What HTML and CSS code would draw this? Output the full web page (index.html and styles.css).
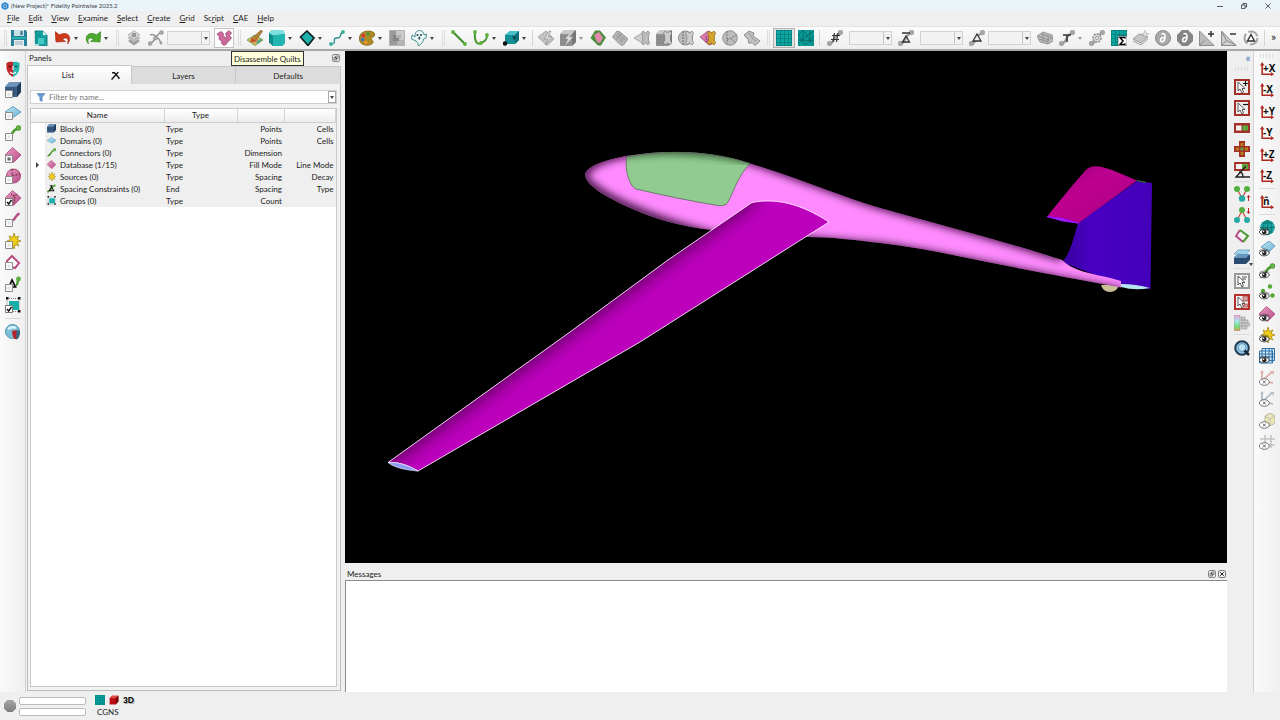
FILE: index.html
```html
<!DOCTYPE html>
<html lang="en">
<head>
<meta charset="utf-8">
<title>(New Project)* Fidelity Pointwise 2025.2</title>
<link rel="stylesheet" href="styles.css">
</head>
<body>
<svg class="sprite" aria-hidden="true">
  <defs>
    <linearGradient id="gPink" x1="0" y1="0" x2="1" y2="1"><stop offset="0" stop-color="#eb9cc4"/><stop offset="1" stop-color="#b84a86"/></linearGradient>
    <linearGradient id="gGrey" x1="0" y1="0" x2="0" y2="1"><stop offset="0" stop-color="#a8a8a8"/><stop offset="1" stop-color="#7c7c7c"/></linearGradient>
    <linearGradient id="gSky" x1="0" y1="0" x2="1" y2="1"><stop offset="0" stop-color="#bfe6f5"/><stop offset="1" stop-color="#6fb4d6"/></linearGradient>
    <linearGradient id="gSpec" x1="0" y1="0" x2="0" y2="1"><stop offset="0" stop-color="#f5a0d8"/><stop offset=".4" stop-color="#a0e8e8"/><stop offset=".75" stop-color="#70d870"/><stop offset="1" stop-color="#f0a060"/></linearGradient>
  </defs>
  <symbol id="box" viewBox="0 0 16 16"><path d="M.5 8.500h7v7h-7z" fill="#fafafa" stroke="#8a8a8a"/><path d="M2.500 10.500h3v3h-3z" fill="#e2e2e6"/></symbol>
  <symbol id="tick" viewBox="0 0 16 16"><path d="M.5 8.500h7v7h-7z" fill="#fff" stroke="#777"/><path d="M2 12l1.700 2L6.500 10" fill="none" stroke="#111" stroke-width="1.400"/></symbol>
  <symbol id="eye" viewBox="0 0 16 16"><path d="M0 12C2 8.500 8.500 8.500 10.500 12 8.500 15.800 2 15.800 0 12z" fill="#fff" stroke="#222" stroke-width=".8"/><circle cx="5.300" cy="12" r="2.300" fill="#222"/><circle cx="4.600" cy="11.300" r=".8" fill="#fff"/><path d="M0 10C3 7.500 7.500 7.500 10.500 10" fill="none" stroke="#444" stroke-width=".6"/></symbol>
  <symbol id="eyex" viewBox="0 0 16 16"><ellipse cx="5.300" cy="12" rx="5" ry="3.300" fill="#fff" stroke="#555" stroke-width=".8"/><path d="M3.800 10.500l3 3m0-3l-3 3" stroke="#444" stroke-width=".8"/></symbol>
  <symbol id="cpt" viewBox="0 0 16 16"><path d="M2 14C9 13 6 4 14 3" fill="none" stroke="#999" stroke-width="2.200"/><circle cx="2.500" cy="13.500" r="2.300" fill="#a6a6a6" stroke="#888" stroke-width=".5"/><circle cx="13.500" cy="2.500" r="2.300" fill="#a6a6a6" stroke="#888" stroke-width=".5"/></symbol>
  <symbol id="bandaid" viewBox="0 0 16 16"><path d="M9 1l2.500 2L14 1l1.700 2.300-1.200 2.200v5l1.200 2.200L14 15l-2.500-2L9 15l-1.500-2.300 1.200-2.200v-5L7.500 3.300z" stroke-width=".7"/></symbol>

  <symbol id="logo" viewBox="0 0 16 16"><path d="M8 0l7 4v8l-7 4-7-4V4z" fill="#2a86d0"/><path d="M8 3l4 2.500v5L8 13l-4-2.500v-5z" fill="#9fd8f5"/><path d="M8 3v10M4 5.500l8 5m0-5l-8 5" stroke="#145a9a"/></symbol>
  <symbol id="save" viewBox="0 0 16 16"><path d="M0 0h14.500L16 1.500V16H0z" fill="#2a7f9b"/><path d="M3 0h10v6H3z" fill="#c5dfe5"/><path d="M9.500 1h2v4h-2z" fill="#2a6f88"/><path d="M1 7h14v2H1z" fill="#25b3ad"/><path d="M3 10h10v6H3z" fill="#e9f0f0"/><path d="M4 12h8M4 14h8" stroke="#9ab"/></symbol>
  <symbol id="export" viewBox="0 0 16 16"><path d="M2 1h8l4 4v11H2z" fill="#19a8a4" stroke="#157f80"/><path d="M10 1v4h4z" fill="#d6f2f2"/><path d="M4 1v14M7 1v14M10 6v9M2 5h7M2 8h12M2 11h12" stroke="#0c8583" stroke-width=".6"/><path d="M1 3v12h5" fill="none" stroke="#eee" stroke-width="1.500"/><path d="M5 8h6v6H5z" fill="#44c9c4"/></symbol>
  <symbol id="undo" viewBox="0 0 16 16"><path d="M0 1.500L1 12l9.500-.5-3-2.500C12 6.500 14 9 12.500 14 18 7.500 13 .5 4.500 4.800z" fill="#cf3a1c" stroke="#9c2810" stroke-width=".6"/></symbol>
  <symbol id="redo" viewBox="0 0 16 16"><path d="M16 1.500L15 12l-9.500-.5 3-2.500C4 6.500 2 9 3.500 14-2 7.500 3 .5 11.500 4.800z" fill="#4cab2c" stroke="#2f7f18" stroke-width=".6"/></symbol>
  <symbol id="layers" viewBox="0 0 16 16"><path d="M8 7l6 4-6 4.500L2 11z" fill="#9c9c9c"/><path d="M8 4l6 4-6 4.500L2 8z" fill="#bcbcbc" stroke="#a8a8a8" stroke-width=".6"/><path d="M8 .5L14 5 8 9.500 2 5z" fill="#d4d4d4" stroke="#a0a0a0" stroke-width=".6"/><path d="M6 3h4v4H6z" fill="#999"/></symbol>
  <symbol id="conngrey" viewBox="0 0 16 16"><path d="M1 14C8 12 7 4 14 2M2 5c4-2 9 3 11 8" fill="none" stroke="#999" stroke-width="1.500"/><g fill="#aaa" stroke="#888" stroke-width=".5"><circle cx="2" cy="13.500" r="2"/><circle cx="13.500" cy="2.500" r="2"/><circle cx="7.500" cy="8" r="2"/><circle cx="13" cy="13" r="1.200"/></g></symbol>
  <symbol id="disassemble" viewBox="0 0 16 16"><g fill="#cf6a9c" stroke="#a04674" stroke-width=".8"><path d="M1 4l4-2.500 2.500 2-.5 2.500 2.500 1.500-.5 2.500 2.500 1.500-.5 2-3 2-2.500-2 .5-2.500L3 9.500l.5-2.500z"/><path d="M9.500 3.500l3.500-3L15.500 3l-2 2.500 2 2.500-3 3.500-2.500-2 .5-3z"/></g></symbol>
  <symbol id="paint" viewBox="0 0 16 16"><path d="M0 10l8-5 8 5-8 5.500z" fill="#d9c45a" stroke="#5b8e3c" stroke-width=".8"/><path d="M3 10l5-3 4 3-5 3.500z" fill="#df8250"/><path d="M9 12l4-3 2 1-5 4z" fill="#44aa88"/><path d="M5 8.500L14 0l1.500 1.500-7 9-3.500 1z" fill="#b68334" stroke="#72501c" stroke-width=".6"/><path d="M5 8l3 3-5 1z" fill="#cf4331"/></symbol>
  <symbol id="cube" viewBox="0 0 16 16"><path d="M0 3l3-3h11l2 4v9l-3 3H4L0 12z" fill="#1ba5a2"/><path d="M0 3l4 2.500V16l-4-3.500z" fill="#0e8a87"/><path d="M0 3l3-3h11l2 4-12 1.500z" fill="#7de0dc"/><path d="M4 5.500L16 4v9l-3 3H4z" fill="#21b5b0"/></symbol>
  <symbol id="dom" viewBox="0 0 16 16"><path d="M8 1l7 7-6 7.500L1.500 7z" fill="#1fb0aa" stroke="#0a1b1d" stroke-width="1.600"/></symbol>
  <symbol id="curve" viewBox="0 0 16 16"><path d="M2 14c7 0 0-6 6-6s2-6 6-6" fill="none" stroke="#268d8c" stroke-width="1.300"/><circle cx="2" cy="14" r="1.900" fill="#3fae9b"/><circle cx="14" cy="2" r="1.900" fill="#3fae9b"/></symbol>
  <symbol id="palette" viewBox="0 0 16 16"><path d="M9 1c8 0 8 5 5 6-3 1-1 3 0 4 1 3-4 5-8 4C-2 14-2 1 9 1z" fill="#ad8a26" stroke="#765b10" stroke-width=".7"/><circle cx="4.500" cy="5.500" r="1.800" fill="#d33"/><circle cx="9" cy="4" r="1.700" fill="#3a9a3a"/><circle cx="3.500" cy="9.500" r="1.700" fill="#3f70c8"/><circle cx="7" cy="12.500" r="1.700" fill="#f0952c"/></symbol>
  <symbol id="greysq" viewBox="0 0 16 16"><path d="M0 0h16v16H0z" fill="#b4b4b4"/><path d="M1 1h7v14H1z" fill="#9a9a9a"/><path d="M7 1h8v9H7z" fill="#cacaca"/><path d="M4 5h6v6H4z" fill="#858585"/><path d="M7 5h5v3H7z" fill="#b0b0b0"/></symbol>
  <symbol id="ghost" viewBox="0 0 16 16"><path d="M4 5c0-6 9-6 9 0l2.500-1-.5 4-2.500 1c0 3-2 5-5.500 7 1-3-1-3-2-5L.5 9 1 5l3 2z" fill="#eaf7f7" stroke="#3f8587" stroke-width=".9"/><circle cx="6.500" cy="5" r="1" fill="#244"/><circle cx="10" cy="5" r="1" fill="#244"/><ellipse cx="8.300" cy="8" rx="1" ry="1.600" fill="#244"/></symbol>
  <symbol id="line" viewBox="0 0 16 16"><path d="M2 2l12 12" stroke="#3b8c28" stroke-width="2"/><circle cx="2" cy="2" r="1.900" fill="#5fb33c"/><circle cx="14" cy="14" r="1.900" fill="#5fb33c"/></symbol>
  <symbol id="ucurve" viewBox="0 0 16 16"><path d="M2 2c-1 11 3 13 6 11 4-2 6-3 6-8" fill="none" stroke="#47952e" stroke-width="2"/><circle cx="2" cy="2" r="1.900" fill="#5fb33c"/><circle cx="14" cy="5" r="1.900" fill="#5fb33c"/><circle cx="8" cy="13" r="1.900" fill="#5fb33c"/></symbol>
  <symbol id="cubept" viewBox="0 0 16 16"><path d="M2 5l5-4h9v9l-4 4H2z" fill="#158f96"/><path d="M2 5l5-4h9l-4 4z" fill="#48c0c6"/><path d="M12 5l4-4v9l-4 4z" fill="#0b6f78"/><circle cx="2" cy="13.500" r="2.300" fill="#111"/><path d="M9 6l4 1-2 3z" fill="#0a3c42"/></symbol>
  <symbol id="gflash" viewBox="0 0 16 16"><path d="M0 7l8-6 8 8-7 6.500z" fill="#c3c3c3" stroke="#999" stroke-width=".8"/><path d="M11 1L6 9h4l-3 6 7-8h-4l3-6z" fill="#ddd" stroke="#888" stroke-width=".6"/></symbol>
  <symbol id="gcube" viewBox="0 0 16 16"><path d="M0 4l4-4h12v12l-4 4H0z" fill="#999"/><path d="M0 4l4-4h12l-4 4z" fill="#c9c9c9"/><path d="M12 4l4-4v12l-4 4z" fill="#777"/><path d="M2 4v12M4.500 4v12M7 4v12M9.500 4v12M0 7h12M0 10h12M0 13h12" stroke="#808080" stroke-width=".7"/></symbol>
  <symbol id="gcubef" viewBox="0 0 16 16"><use href="#gcube"/><path d="M12 1L5 9h3l-3 7 8-9H9l5-6z" fill="#e2e2e2" stroke="#999" stroke-width=".5"/></symbol>
  <symbol id="gcubeb" viewBox="0 0 16 16"><use href="#gcube"/><use href="#bandaid" fill="#ccc" stroke="#777"/></symbol>
  <symbol id="greenpink" viewBox="0 0 16 16"><path d="M5 .5h5l6 7-5 8H8L.5 8z" fill="#4b8d3b"/><path d="M4 5l5-3 4 6-3 5-3-1z" fill="#e389ac"/></symbol>
  <symbol id="gdia" viewBox="0 0 16 16"><path d="M5 1l3 1 8 7-5 6.500-3-1L.5 7z" fill="#b5b5b5" stroke="#969696"/><path d="M4 5l7 7M6 3l7 7M4 10l6-7M8 12l5-6" stroke="#8b8b8b" stroke-width=".7"/></symbol>
  <symbol id="gfanb" viewBox="0 0 16 16"><path d="M0 8l10-6v12z" fill="#cfcfcf" stroke="#999" stroke-width=".8"/><use href="#bandaid" fill="#bbb" stroke="#808080"/></symbol>
  <symbol id="gballb" viewBox="0 0 16 16"><circle cx="7.500" cy="8" r="7" fill="#bcbcbc" stroke="#959595"/><path d="M5 1v14" stroke="#666" stroke-dasharray="2 1"/><use href="#bandaid" fill="#ccc" stroke="#777"/></symbol>
  <symbol id="pinkb" viewBox="0 0 16 16"><path d="M0 7l8-6 4 2v11l-3 1z" fill="url(#gPink)" stroke="#a34678" stroke-width=".8"/><path d="M5 6l2 2-1 4" fill="none" stroke="#722f54" stroke-dasharray="1 1"/><use href="#bandaid" fill="#d3a52e" stroke="#8c6718"/></symbol>
  <symbol id="gball" viewBox="0 0 16 16"><circle cx="8" cy="8" r="7.300" fill="#bdbdbd" stroke="#939393"/><path d="M5 1v13M5 10l10-5M9 9l5 4" fill="none" stroke="#777" stroke-dasharray="2 1"/></symbol>
  <symbol id="gquilt" viewBox="0 0 16 16"><path d="M0 5l5-4 5 2-1 3 7 5-5 4.500-3-3-3 1-1-4z" fill="#c0c0c0" stroke="#8e8e8e"/><path d="M5 3l3 5m0 0l4 3" stroke="#777" stroke-dasharray="1 1"/></symbol>
  <symbol id="grid" viewBox="0 0 16 16"><path d="M0 0h16v16H0z" fill="#0aa7a2"/><path d="M.5 0v16M4.500 0v16M8.500 0v16M12.500 0v16M15.500 0v16M0 .5h16M0 4.500h16M0 8.500h16M0 12.500h16M0 15.500h16" stroke="#067d7a" stroke-width=".8"/></symbol>
  <symbol id="tri" viewBox="0 0 16 16"><path d="M0 0h16v16H0z" fill="#0a9b98"/><path d="M0 5l5-5 4 6 7-5M0 5l4 5 5-4 3 5 4-6M0 14l4-4 3 5 5-4 4 4M0 10l4 0 8 1 4-1M5 0v10M12 0v11" fill="none" stroke="#04605f" stroke-width=".7"/></symbol>
  <symbol id="dim" viewBox="0 0 16 16"><use href="#cpt"/><path d="M5 5.500h8M4 9.500h8M7.500 3L6 12M11 3L9.500 12" stroke="#333" stroke-width="1.200"/></symbol>
  <symbol id="avgsp" viewBox="0 0 16 16"><use href="#cpt"/><path d="M4 3h8M8 6l3.500 6h-7z" fill="none" stroke="#333" stroke-width="1.300"/></symbol>
  <symbol id="sp" viewBox="0 0 16 16"><use href="#cpt"/><path d="M8 4l4 7H4z" fill="#eee" stroke="#333" stroke-width="1.300"/></symbol>
  <symbol id="gband" viewBox="0 0 16 16"><path d="M0 6l6-4 9 3 1 6-5 3-8-2z" fill="#bbb" stroke="#999"/><path d="M1 6l10 4 5-3M4 4l10 3M2 9l9 3M6 3v8M11 5v9" fill="none" stroke="#8a8a8a" stroke-width=".8"/></symbol>
  <symbol id="tan" viewBox="0 0 16 16"><use href="#cpt"/><path d="M4 5h8M8 5v7" stroke="#333" stroke-width="1.500"/></symbol>
  <symbol id="gearc" viewBox="0 0 16 16"><use href="#cpt"/><circle cx="8" cy="8" r="4" fill="#ddd" stroke="#999" stroke-width="1.800" stroke-dasharray="2 1"/><circle cx="8" cy="8" r="1.500" fill="#fff" stroke="#999"/></symbol>
  <symbol id="gridsum" viewBox="0 0 16 16"><use href="#grid"/><path d="M7 6h9v10H7z" fill="#fff" stroke="#333" stroke-width=".6"/><path d="M14 8.500V7.500H9l3 3.500-3 3.500h5v-1" fill="none" stroke="#000" stroke-width="1.500"/></symbol>
  <symbol id="glayer" viewBox="0 0 16 16"><path d="M0 9l6-5 9 3-7 6z" fill="#c6c6c6" stroke="#999"/><path d="M0 11l8 4 7-6" fill="none" stroke="#999"/><path d="M12 0l1 3 3 1-3 1-1 3-1-3-3-1 3-1z" fill="#ddd" stroke="#aaa" stroke-width=".5"/></symbol>
  <symbol id="dcirc" viewBox="0 0 16 16"><circle cx="8" cy="8" r="7.500" fill="#a9a9a9" stroke="#8a8a8a"/><path d="M6.500 4c5-2.500 4 6 1.500 7.500-3.500 1.500-3-4.500.5-4 1 0 1.500 1 1.500 1" fill="none" stroke="#fff" stroke-width="1.500"/></symbol>
  <symbol id="doct" viewBox="0 0 16 16"><path d="M5 0h6l5 5v6l-5 5H5l-5-5V5z" fill="#858585"/><path d="M6.500 4c5-2.500 4 6 1.500 7.500-3.500 1.500-3-4.500.5-4 1 0 1.500 1 1.500 1" fill="none" stroke="#fff" stroke-width="1.500"/></symbol>
  <symbol id="triplus" viewBox="0 0 16 16"><path d="M.5 1v14.500H15z" fill="#bcbcbc" stroke="#8d8d8d"/><path d="M.5 15.500l5-5" stroke="#888"/><path d="M9 4h6M12 1v6" stroke="#333" stroke-width="1.500"/></symbol>
  <symbol id="triminus" viewBox="0 0 16 16"><path d="M.5 1v14.500H15z" fill="#cdcdcd" stroke="#8d8d8d"/><path d="M.5 15.500l5-5L15 15M5.500 10.500L1 2" fill="none" stroke="#888"/><path d="M9 4h6" stroke="#333" stroke-width="1.500"/></symbol>
  <symbol id="tricyc" viewBox="0 0 16 16"><circle cx="8" cy="8" r="6.500" fill="none" stroke="#aaa" stroke-width="2.200" stroke-dasharray="11 2.500"/><path d="M8 4.500l3.500 6.500h-7z" fill="#fff" stroke="#333" stroke-width="1.400"/></symbol>

  <symbol id="mask" viewBox="0 0 16 16"><path d="M8 1v15C2 13 1 8 1.500 2 4 .5 6 .5 8 1z" fill="#c4242c"/><path d="M8 1c2-.5 4-.5 6.500 1C15 8 14 13 8 16z" fill="#27b5ae"/><path d="M3.500 5.500h3" stroke="#5c0c10" stroke-width="1.500"/><path d="M9.500 5.500h3" stroke="#0a5a56" stroke-width="1.500"/><path d="M8 5v4M5 11q3 3 6 0" fill="none" stroke="#fff" stroke-width="1.100"/></symbol>
  <symbol id="bcube" viewBox="0 0 16 16"><path d="M0 5l4-4.500L16 0v10l-4 5H0z" fill="#3d628c"/><path d="M0 5l4-4.500L16 0l-4 4.500z" fill="#6d94b8"/><path d="M12 4.500L16 0v10l-4 5z" fill="#213b5c"/><path d="M3 5v10M6 5v10M9 5v10M0 8h12M0 11h12" stroke="#29476b" stroke-width=".8"/></symbol>
  <symbol id="sky" viewBox="0 0 16 16"><path d="M0 8l8-5.500L16 8l-7 5z" fill="url(#gSky)" stroke="#4c93b5" stroke-width=".8"/></symbol>
  <symbol id="gconn" viewBox="0 0 16 16"><path d="M1 13.500C9 14 4 6 13 3.500" fill="none" stroke="#4c9a30" stroke-width="2.800"/><circle cx="13.500" cy="3" r="2.500" fill="#63b544" stroke="#357a1e" stroke-width=".5"/></symbol>
  <symbol id="pink" viewBox="0 0 16 16"><path d="M7.500 .5L16 8l-7.500 7.500L0 8z" fill="url(#gPink)" stroke="#a64679" stroke-width=".8"/></symbol>
  <symbol id="star" viewBox="0 0 16 16"><path d="M9 0l1.500 4.500L14 3l-2 3.500 4 1.500-4 1.500L14 13l-3.500-1.500L9 16l-1.500-4.500L4 13l1.500-3.500L2 8l3.500-1.500L4 3l3.500 1.500z" fill="#f2cd18" stroke="#9c7d0c" stroke-width=".7"/></symbol>
  <symbol id="tri3" viewBox="0 0 16 16"><path d="M11 9c2 0 1-3 2.500-6" fill="none" stroke="#4c9a30" stroke-width="2.400"/><circle cx="13.500" cy="3" r="2.400" fill="#58ae3a"/><path d="M7 4l3.500 7H4z" fill="none" stroke="#111" stroke-width="1.700"/></symbol>
  <symbol id="spc" viewBox="0 0 16 16"><path d="M1 14C8 13 8 4 14 2" fill="none" stroke="#4c9a30" stroke-width="2.400"/><circle cx="2" cy="13.500" r="2" fill="#58ae3a"/><circle cx="13.500" cy="3" r="2" fill="#58ae3a"/><path d="M5 3h5M8 5l4 7H4z" fill="none" stroke="#111" stroke-width="1.800"/></symbol>
  <symbol id="group" viewBox="0 0 16 16"><path d="M2 1.500h12v13H2z" fill="none" stroke="#666" stroke-width=".8" stroke-dasharray="1 1"/><path d="M4 4h10v9H4z" fill="#16afa9"/><path d="M1 0h2.500v2.500H1zM13 0h2.500v2.500H13zM13 13h2.500v2.500H13zM1 13h2.500v2.500H1z" fill="#111"/></symbol>
  <symbol id="l-block" viewBox="0 0 16 16"><use href="#bcube"/><use href="#box"/></symbol>
  <symbol id="l-dom" viewBox="0 0 16 16"><use href="#sky"/><use href="#box"/></symbol>
  <symbol id="l-conn" viewBox="0 0 16 16"><use href="#gconn"/><use href="#box"/></symbol>
  <symbol id="l-pink" viewBox="0 0 16 16"><use href="#pink"/><use href="#box"/><path d="M2.500 10.500h3v3h-3z" fill="#666"/></symbol>
  <symbol id="l-ball" viewBox="0 0 16 16"><circle cx="8.500" cy="8" r="7" fill="url(#gPink)" stroke="#a64679"/><path d="M7 1v7l8-2" fill="none" stroke="#522" stroke-dasharray="2 1.500"/><use href="#box"/></symbol>
  <symbol id="l-quilt" viewBox="0 0 16 16"><use href="#pink"/><path d="M6 4l4 3-1 6M8 6l5-2" fill="none" stroke="#522" stroke-dasharray="1.500 1"/><use href="#tick"/></symbol>
  <symbol id="l-curve" viewBox="0 0 16 16"><path d="M2 10C12 11 9 4 14.500 2.500" fill="none" stroke="#b84a80" stroke-width="2.400"/><use href="#box"/></symbol>
  <symbol id="l-star" viewBox="0 0 16 16"><use href="#star"/><use href="#box"/></symbol>
  <symbol id="l-loop" viewBox="0 0 16 16"><path d="M7 2l7 7-4 5-7-2-1-5z" fill="#fff" stroke="#b84a80" stroke-width="2"/><use href="#box"/></symbol>
  <symbol id="l-tri" viewBox="0 0 16 16"><use href="#tri3"/><use href="#box"/></symbol>
  <symbol id="l-group" viewBox="0 0 16 16"><use href="#group"/><use href="#tick"/></symbol>
  <symbol id="l-mask" viewBox="0 0 16 16"><circle cx="7.500" cy="7.500" r="7" fill="#7fc0d6" stroke="#4f93ab"/><path d="M3 5q4-3 8-1" fill="none" stroke="#d8f5fc" stroke-width="2.500"/><path d="M7 7q4-1.500 8 0 0 7-4 8.500-4-1.500-4-8.500z" fill="#b3262e"/><path d="M11.500 6.300q2 0 3.500.7 0 7-3.500 8.500z" fill="#2b6f8c"/></symbol>

  <symbol id="cursor" viewBox="0 0 16 16"><path d="M4 3v9l2-2 2 4 1.500-1L8 9.500h3z" fill="#fff" stroke="#333" stroke-width=".8"/></symbol>
  <symbol id="selp" viewBox="0 0 16 16"><path d="M1 1h14v14H1z" fill="#eee" stroke="#a33027" stroke-width="2"/><use href="#cursor"/><path d="M9 4.500h5M11.500 2v5" stroke="#111" stroke-width="1.200"/></symbol>
  <symbol id="selm" viewBox="0 0 16 16"><path d="M1 1h14v14H1z" fill="#eee" stroke="#a33027" stroke-width="2"/><use href="#cursor"/><path d="M9 4.500h5" stroke="#111" stroke-width="1.200"/></symbol>
  <symbol id="toggle" viewBox="0 0 16 16"><path d="M0 3h16v10H0z" fill="#a33027"/><path d="M2 5.500h5.500v5H2z" fill="#f2f2f2"/><path d="M8.500 5.500H14v5H8.500z" fill="#58a838"/></symbol>
  <symbol id="cross" viewBox="0 0 16 16"><path d="M5 0h6v5h5v6h-5v5H5v-5H0V5h5z" fill="#a33027"/><path d="M6.500 2h3v3h-3zM2 6.500h3v3H2zM11 6.500h3v3h-3zM6.500 11h3v3h-3z" fill="#b8801c"/><path d="M6.500 6.500h3v3h-3z" fill="#58a838"/></symbol>
  <symbol id="angle" viewBox="0 0 16 16"><path d="M1 1h14v7H1z" fill="#f2f2f2" stroke="#a33027" stroke-width="1.800"/><path d="M8 2h6v5H8z" fill="#58a838"/><path d="M12 4L2 15h14M5 10q4 0 4 5" fill="none" stroke="#222" stroke-width="1.400"/></symbol>
  <symbol id="tree1" viewBox="0 0 16 16"><path d="M3 3l5 9 5-9" fill="none" stroke="#c43" stroke-width="1.200"/><circle cx="3" cy="3" r="3" fill="#55b043"/><circle cx="13" cy="3" r="3" fill="#55b043"/><circle cx="8" cy="12.500" r="3.200" fill="#27aaa5"/><path d="M14.500 15v-5M13 11.500l1.500-2 1.500 2" fill="none" stroke="#b22"/></symbol>
  <symbol id="tree2" viewBox="0 0 16 16"><path d="M3 13l5-9 5 9" fill="none" stroke="#c43" stroke-width="1.200"/><circle cx="8" cy="3" r="3" fill="#55b043"/><circle cx="3" cy="13" r="3" fill="#27aaa5"/><circle cx="13" cy="13" r="3" fill="#27aaa5"/><path d="M14.500 1v5M13 4.500l1.500 2 1.500-2" fill="none" stroke="#b22"/></symbol>
  <symbol id="diaout" viewBox="0 0 16 16"><path d="M9 14L2 8l4-6" fill="none" stroke="#b54c8c" stroke-width="2"/><path d="M6 2l8 6-5 6" fill="none" stroke="#4c9a30" stroke-width="2"/></symbol>
  <symbol id="stack" viewBox="0 0 16 16"><path d="M0 9l4-3h12v5l-4 4H0z" fill="#2a4a70"/><path d="M0 8l4-3h12l-4 4H0z" fill="#6794bd"/><path d="M0 5l4-4h12l-4 4.500z" fill="#9fd4ea" stroke="#4d87ab" stroke-width=".6"/></symbol>
  <symbol id="selg" viewBox="0 0 16 16"><path d="M1 1h14v14H1z" fill="#f5f5f5" stroke="#999" stroke-width="2"/><use href="#cursor"/><path d="M8 4h5M8 6h4" stroke="#555"/></symbol>
  <symbol id="selr" viewBox="0 0 16 16"><path d="M1 1h14v14H1z" fill="#f5f5f5" stroke="#b53129" stroke-width="2"/><use href="#cursor"/><path d="M9 2h5v5H9zM10 10h4v3h-4z" fill="#c9a6a6" stroke="#b53129" stroke-width=".7"/></symbol>
  <symbol id="spec" viewBox="0 0 16 16"><path d="M0 0h6v16H0z" fill="url(#gSpec)" stroke="#888" stroke-width=".5"/><path d="M7 2h4v3h3v3h2v3h-3v3H7z" fill="#c9c9c9" stroke="#999" stroke-width=".6"/><path d="M7 5h5M7 8h7M7 11h6" stroke="#888" stroke-width=".7"/></symbol>
  <symbol id="mag" viewBox="0 0 16 16"><circle cx="8" cy="8" r="6.800" fill="#8fc6e2" stroke="#243c52" stroke-width="2"/><circle cx="8" cy="7.500" r="4" fill="#b8e2f2" stroke="#5b96b8"/><path d="M10.500 10.500l4.500 4.500" stroke="#182838" stroke-width="2.500"/></symbol>
  <symbol id="axis" viewBox="0 0 16 16"><path d="M2.500 2v12H14" fill="none" stroke="#ad2a20" stroke-width="1.800"/><path d="M0 4l2.500-4L5 4zM12.500 11.500l3.500 2.500-3.500 2.500z" fill="#ad2a20"/></symbol>
  <symbol id="e-globe" viewBox="0 0 16 16"><circle cx="8.500" cy="7.500" r="7.300" fill="#1ba5a2"/><path d="M1 7.500h15M8.500 0v15M3 3h11M3 12h11" stroke="#0a6f6d" stroke-width=".8"/><ellipse cx="8.500" cy="7.500" rx="4" ry="7.300" fill="none" stroke="#0a6f6d" stroke-width=".8"/><use href="#eye"/></symbol>
  <symbol id="e-dom" viewBox="0 0 16 16"><path d="M2 6l8-6 6 5-6 6z" fill="url(#gSky)" stroke="#4c93b5" stroke-width=".8"/><use href="#eye"/></symbol>
  <symbol id="e-conn" viewBox="0 0 16 16"><use href="#gconn"/><use href="#eye"/></symbol>
  <symbol id="e-pts" viewBox="0 0 16 16"><g fill="#55a838"><circle cx="4" cy="7" r="2.200"/><circle cx="11" cy="2.500" r="2.200"/><circle cx="13.500" cy="11.500" r="2.200"/></g><use href="#eye"/></symbol>
  <symbol id="e-pink" viewBox="0 0 16 16"><use href="#pink"/><use href="#eye"/></symbol>
  <symbol id="e-star" viewBox="0 0 16 16"><use href="#star"/><use href="#eye"/></symbol>
  <symbol id="e-grid" viewBox="0 0 16 16"><path d="M.5 3h13v12H.5zM3 .5h12.500v12H3z" fill="#d6ecfa" stroke="#2c70a8"/><path d="M6.500 0v14M10 0v14M13 0v14M0 6h16M0 9h16" stroke="#2c70a8"/><use href="#eye"/></symbol>
  <symbol id="x-ax1" viewBox="0 0 16 16"><path d="M3 1v10l11 2M3 11L13 2" fill="none" stroke="#dfb3ae" stroke-width="2"/><path d="M1 3l2-3 2 3zM11 1h4v4z" fill="#dfb3ae"/><use href="#eyex"/></symbol>
  <symbol id="x-ax2" viewBox="0 0 16 16"><path d="M3 1v10l11 2M3 11L13 2" fill="none" stroke="#b9c1cb" stroke-width="2"/><path d="M1 3l2-3 2 3zM11 1h4v4z" fill="#b9c1cb"/><use href="#eyex"/></symbol>
  <symbol id="x-cube" viewBox="0 0 16 16"><path d="M6 3l5-3 5 3v7l-5 3-5-3z" fill="#ece6b4" stroke="#b5b5a0"/><path d="M6 3l5 3 5-3M11 6v7" fill="none" stroke="#bbb"/><use href="#eyex"/></symbol>
  <symbol id="x-hash" viewBox="0 0 16 16"><path d="M6 1v13M12 1v13M1 5h15M1 11h15" stroke="#c3c3c3" stroke-width="1.600"/><use href="#eyex"/></symbol>
  <symbol id="funnel" viewBox="0 0 16 16"><path d="M1 1h14l-5 6.500V15l-4-2V7.500z" fill="#6d9bd1" stroke="#4675ad"/></symbol>
  <symbol id="pin" viewBox="0 0 16 16"><path d="M1 15L13 2M2 3h4l8 9v2" fill="none" stroke="#111" stroke-width="2.600"/></symbol>
  <symbol id="float" viewBox="0 0 16 16"><rect x="1" y="1" width="14" height="14" rx="3" fill="#eee" stroke="#666" stroke-width="1.500"/><path d="M7 4h5v5H7zM4 7h5v5H4z" fill="none" stroke="#444" stroke-width="1.300"/></symbol>
  <symbol id="close" viewBox="0 0 16 16"><rect x="1" y="1" width="14" height="14" rx="3" fill="#eee" stroke="#555" stroke-width="1.500"/><path d="M4.500 4.500l7 7m0-7l-7 7" stroke="#222" stroke-width="2"/></symbol>
  <symbol id="redcube" viewBox="0 0 16 16"><path d="M1 5l4-4h10v9l-4 5H1z" fill="#ba0d14"/><path d="M1 5l4-4h10l-4 4z" fill="#e34a48"/><path d="M11 5l4-4v9l-4 5z" fill="#730509"/></symbol>
  <symbol id="oct" viewBox="0 0 16 16"><path d="M5 0h6l5 5v6l-5 5H5l-5-5V5z" fill="url(#gGrey)" stroke="#777" stroke-width=".5"/></symbol>
</svg>

<div class="app">
  <header class="titlebar">
    <svg class="logo"><use href="#logo"/></svg>
    <h1 class="title">(New Project)* Fidelity Pointwise 2025.2</h1>
    <div class="winbtns">
      <button type="button" aria-label="Minimize"><svg viewBox="0 0 6 6"><path d="M0 3.500h6" /></svg></button>
      <button type="button" aria-label="Restore"><svg viewBox="0 0 6 6"><path d="M.5 2h3.500v3.500H.5zM2 2V.5h3.500V4H4"/></svg></button>
      <button type="button" aria-label="Close"><svg viewBox="0 0 6 6"><path d="M.5.5l5 5m0-5l-5 5"/></svg></button>
    </div>
  </header>

  <nav class="menubar">
    <button type="button"><u>F</u>ile</button><button type="button"><u>E</u>dit</button><button type="button"><u>V</u>iew</button><button type="button"><u>E</u>xamine</button><button type="button"><u>S</u>elect</button><button type="button"><u>C</u>reate</button><button type="button"><u>G</u>rid</button><button type="button">Sc<u>r</u>ipt</button><button type="button"><u>C</u>AE</button><button type="button"><u>H</u>elp</button>
  </nav>

  <div class="toolbar" role="toolbar" aria-label="Main">
    <i class="grip lead"></i>
    <button class="tool" type="button" aria-label="Save"><svg><use href="#save"/></svg></button>
    <button class="tool" type="button" aria-label="Export"><svg><use href="#export"/></svg></button>
    <button class="tool" type="button" aria-label="Undo"><svg><use href="#undo"/></svg></button>
    <button class="drop" type="button" aria-label="Undo list"></button>
    <button class="tool" type="button" aria-label="Redo"><svg><use href="#redo"/></svg></button>
    <button class="drop" type="button" aria-label="Redo list"></button>
    <i class="grip wide"></i>
    <button class="tool" type="button" aria-label="Layers"><svg><use href="#layers"/></svg></button>
    <button class="tool" type="button" aria-label="Join connectors"><svg><use href="#conngrey"/></svg></button>
    <span class="combo first"><select aria-label="Angle"></select></span>
    <button class="tool hover" type="button" aria-label="Disassemble Quilts"><svg><use href="#disassemble"/></svg><span class="tooltip">Disassemble Quilts</span></button>
    <i class="grip"></i>
    <button class="tool" type="button" aria-label="Attributes"><svg><use href="#paint"/></svg></button>
    <button class="tool" type="button" aria-label="Shaded"><svg><use href="#cube"/></svg></button>
    <button class="drop" type="button" aria-label="Shading options"></button>
    <button class="tool" type="button" aria-label="Domain style"><svg><use href="#dom"/></svg></button>
    <button class="drop" type="button" aria-label="Domain options"></button>
    <button class="tool" type="button" aria-label="Line style"><svg><use href="#curve"/></svg></button>
    <button class="drop" type="button" aria-label="Line options"></button>
    <button class="tool" type="button" aria-label="Color"><svg><use href="#palette"/></svg></button>
    <button class="drop" type="button" aria-label="Color options"></button>
    <button class="tool" type="button" aria-label="Pattern"><svg><use href="#greysq"/></svg></button>
    <button class="tool" type="button" aria-label="Ghost"><svg><use href="#ghost"/></svg></button>
    <button class="drop" type="button" aria-label="Ghost options"></button>
    <i class="grip"></i>
    <button class="tool" type="button" aria-label="Two point line"><svg><use href="#line"/></svg></button>
    <button class="tool" type="button" aria-label="Curve"><svg><use href="#ucurve"/></svg></button>
    <button class="drop" type="button" aria-label="Curve options"></button>
    <button class="tool" type="button" aria-label="On database"><svg><use href="#cubept"/></svg></button>
    <button class="drop" type="button" aria-label="Database options"></button>
    <i class="sep"></i>
    <button class="tool" type="button" aria-label="Assemble domain"><svg><use href="#gflash"/></svg></button>
    <button class="tool" type="button" aria-label="Assemble block"><svg><use href="#gcubef"/></svg></button>
    <button class="drop off" type="button" aria-label="Block options"></button>
    <button class="tool" type="button" aria-label="Edge"><svg><use href="#greenpink"/></svg></button>
    <button class="tool" type="button" aria-label="Mesh"><svg><use href="#gdia"/></svg></button>
    <button class="tool" type="button" aria-label="Heal fan"><svg><use href="#gfanb"/></svg></button>
    <button class="tool" type="button" aria-label="Heal block"><svg><use href="#gcubeb"/></svg></button>
    <button class="tool" type="button" aria-label="Heal model"><svg><use href="#gballb"/></svg></button>
    <button class="tool" type="button" aria-label="Heal quilt"><svg><use href="#pinkb"/></svg></button>
    <button class="tool" type="button" aria-label="Model"><svg><use href="#gball"/></svg></button>
    <button class="tool" type="button" aria-label="Quilt"><svg><use href="#gquilt"/></svg></button>
    <i class="grip"></i>
    <button class="tool active" type="button" aria-label="Structured"><svg><use href="#grid"/></svg></button>
    <button class="tool" type="button" aria-label="Unstructured"><svg><use href="#tri"/></svg></button>
    <i class="sep wide"></i>
    <button class="tool" type="button" aria-label="Set dimension"><svg><use href="#dim"/></svg></button>
    <span class="combo"><select aria-label="Dimension"></select></span>
    <button class="tool" type="button" aria-label="Set average spacing"><svg><use href="#avgsp"/></svg></button>
    <span class="combo"><select aria-label="Average spacing"></select></span>
    <button class="tool" type="button" aria-label="Set spacing"><svg><use href="#sp"/></svg></button>
    <span class="combo last"><select aria-label="Spacing"></select></span>
    <button class="tool" type="button" aria-label="Project"><svg><use href="#gband"/></svg></button>
    <button class="tool" type="button" aria-label="Distribution"><svg><use href="#tan"/></svg></button>
    <button class="drop off" type="button" aria-label="Distribution options"></button>
    <button class="tool" type="button" aria-label="Solve"><svg><use href="#gearc"/></svg></button>
    <button class="tool" type="button" aria-label="Count cells"><svg><use href="#gridsum"/></svg></button>
    <button class="tool" type="button" aria-label="New layer"><svg><use href="#glayer"/></svg></button>
    <button class="tool" type="button" aria-label="Initialize"><svg><use href="#dcirc"/></svg></button>
    <button class="tool" type="button" aria-label="Stop"><svg><use href="#doct"/></svg></button>
    <button class="tool" type="button" aria-label="Refine"><svg><use href="#triplus"/></svg></button>
    <button class="tool" type="button" aria-label="Coarsen"><svg><use href="#triminus"/></svg></button>
    <button class="tool" type="button" aria-label="Retriangulate"><svg><use href="#tricyc"/></svg></button>
    <i class="sep"></i>
    <button class="more" type="button" aria-label="More tools">»</button>
  </div>

  <main class="main">
    <div class="rail left" role="toolbar" aria-label="Selection masks">
      <div class="set twelve">
        <button class="tool" type="button" aria-label="Toggle all"><svg><use href="#mask"/></svg></button>
        <button class="tool" type="button" aria-label="Mask blocks"><svg><use href="#l-block"/></svg></button>
        <button class="tool" type="button" aria-label="Mask domains"><svg><use href="#l-dom"/></svg></button>
        <button class="tool" type="button" aria-label="Mask connectors"><svg><use href="#l-conn"/></svg></button>
        <button class="tool" type="button" aria-label="Mask database"><svg><use href="#l-pink"/></svg></button>
        <button class="tool" type="button" aria-label="Mask models"><svg><use href="#l-ball"/></svg></button>
        <button class="tool" type="button" aria-label="Mask quilts"><svg><use href="#l-quilt"/></svg></button>
        <button class="tool" type="button" aria-label="Mask curves"><svg><use href="#l-curve"/></svg></button>
        <button class="tool" type="button" aria-label="Mask sources"><svg><use href="#l-star"/></svg></button>
        <button class="tool" type="button" aria-label="Mask boundaries"><svg><use href="#l-loop"/></svg></button>
        <button class="tool" type="button" aria-label="Mask spacings"><svg><use href="#l-tri"/></svg></button>
        <button class="tool" type="button" aria-label="Mask groups"><svg><use href="#l-group"/></svg></button>
      </div>
      <hr>
      <div class="set one"><button class="tool" type="button" aria-label="Mask view"><svg><use href="#l-mask"/></svg></button></div>
    </div>

    <section class="panels">
      <div class="dockhead"><h2>Panels</h2><button type="button" aria-label="Float panels"><svg><use href="#float"/></svg></button></div>
      <div class="tabs" role="tablist">
        <button class="tab on" type="button" role="tab" aria-selected="true"><span>List</span><svg><use href="#pin"/></svg></button>
        <button class="tab" type="button" role="tab">Layers</button>
        <button class="tab" type="button" role="tab">Defaults</button>
      </div>
      <div class="tabbody">
        <div class="filter">
          <svg><use href="#funnel"/></svg>
          <input type="text" aria-label="Filter by name" placeholder="Filter by name...">
          <button type="button" aria-label="Filter history"></button>
        </div>
        <div class="treebox">
          <table class="tree">
            <colgroup><col class="c-ind"><col class="c-name"><col class="c-type"><col class="c-third"><col class="c-fourth"></colgroup>
            <thead><tr><th colspan="2">Name</th><th>Type</th><th></th><th></th></tr></thead>
            <tbody>
              <tr><td></td><td><svg><use href="#bcube"/></svg>Blocks (0)</td><td>Type</td><td>Points</td><td>Cells</td></tr>
              <tr><td></td><td><svg><use href="#sky"/></svg>Domains (0)</td><td>Type</td><td>Points</td><td>Cells</td></tr>
              <tr><td></td><td><svg><use href="#gconn"/></svg>Connectors (0)</td><td>Type</td><td>Dimension</td><td></td></tr>
              <tr><td><button class="expand" type="button" aria-label="Expand Database"></button></td><td><svg><use href="#pink"/></svg>Database (1/15)</td><td>Type</td><td>Fill Mode</td><td>Line Mode</td></tr>
              <tr><td></td><td><svg><use href="#star"/></svg>Sources (0)</td><td>Type</td><td>Spacing</td><td>Decay</td></tr>
              <tr><td></td><td><svg><use href="#spc"/></svg>Spacing Constraints (0)</td><td>End</td><td>Spacing</td><td>Type</td></tr>
              <tr><td></td><td><svg><use href="#group"/></svg>Groups (0)</td><td>Type</td><td>Count</td><td></td></tr>
            </tbody>
          </table>
        </div>
      </div>
    </section>

    <section class="center">
      <div class="viewport">
        <svg class="scene" viewBox="345 51 882 512" role="img" aria-label="Glider model">
          <defs>
            <path id="fus" d="M585 175C586 163 626 152 678 152C708 152 730 158 750 163.500C795 177 840 196 880 208C940 225 1000 240 1062 260C1075 273 1098 274 1121 281V287.500C1085 281 1050 274 1020 268.500C970 259 925 248 880 243C855 240 830 237 808 237L712 230C680 227 650 217 628 207C604 196 586 185 585 175Z"/>
            <path id="wing" d="M388 462.500L570 332L668 260L752 202.500C775 198 800 203 829 222L640 342L418 471C408 465 398 462 388 462.500Z"/>
            <path id="can" d="M626.500 157C660 150 710 150 750 163.500C740 173 734 190 729 200C727 205 724 206 718 205.500C690 201 662 195 636 189C630 186 628 177 626.500 170C626 165 626 161 626.500 157Z"/>
            <clipPath id="cf"><use href="#fus"/></clipPath>
            <clipPath id="cw"><use href="#wing"/></clipPath>
            <clipPath id="cc"><use href="#can"/></clipPath>
            <filter id="b4" x="-20%" y="-40%" width="140%" height="180%"><feGaussianBlur stdDeviation="4"/></filter>
            <filter id="b9" x="-20%" y="-40%" width="140%" height="180%"><feGaussianBlur stdDeviation="9"/></filter>
            <linearGradient id="gStab" x1="0" y1="0" x2="1" y2="1"><stop offset="0" stop-color="#980078"/><stop offset=".4" stop-color="#be0090"/><stop offset="1" stop-color="#a80084"/></linearGradient>
            <linearGradient id="gFin" x1="0" y1="0" x2="1" y2="0"><stop offset="0" stop-color="#3a00a0"/><stop offset=".35" stop-color="#4800c4"/><stop offset="1" stop-color="#4400b8"/></linearGradient>
          </defs>
          <path d="M1101 285h18q-2 7-9 7t-9-7z" fill="#c9c294"/>
          <path d="M1137 181L1152 183L1150.500 289L1121 285L1062 262C1070 254 1073 240 1078 223Z" fill="url(#gFin)"/>
          <path d="M1047 217C1060 200 1075 182 1085 171C1092 163 1102 167 1112 170L1137 180.500L1078 223.500Z" fill="url(#gStab)"/>
          <path d="M1047 216.500Q1062 217 1078 223Q1062 222 1047 216.500Z" fill="#9a20ff" stroke="#9a10ff"/>
          <path d="M1137 180.500l9 2" stroke="#2d8a2a"/>
          <path d="M1121 284Q1136 284 1150 288Q1135 291 1121 287Z" fill="#b5e6f2"/>
          <use href="#fus" fill="#ff8aff"/>
          <g clip-path="url(#cf)">
            <path d="M582 180C584 158 630 149 678 149C708 149 730 155 750 160C795 174 840 193 880 205C940 222 1000 237 1062 257" fill="none" stroke="#300030" stroke-width="8" filter="url(#b4)"/>
            <path d="M583 178C600 198 650 220 712 236L808 241L880 247C930 254 970 263 1020 273L1121 293" fill="none" stroke="#200020" stroke-width="8" filter="url(#b4)"/>
          </g>
          <use href="#can" fill="#92cb92"/>
          <g clip-path="url(#cc)"><path d="M600 156Q678 140 760 160" fill="none" stroke="#143014" stroke-width="8" filter="url(#b4)"/></g>
          <use href="#can" fill="none" stroke="#507050" stroke-width=".8"/>
          <use href="#wing" fill="#bc00bc"/>
          <g clip-path="url(#cw)"><path d="M384 459L566 328L664 256L752 194" fill="none" stroke="#250025" stroke-width="12" filter="url(#b9)"/></g>
          <use href="#wing" fill="none" stroke="#ffe8ff" stroke-width=".9"/>
          <path d="M388 462.500C398 462 408 465 418 471C406 470 395 468 388 462.500Z" fill="#8c9cf0" stroke="#e8e8ff" stroke-width=".7"/>
        </svg>
      </div>
      <div class="messages">
        <div class="dockhead"><h2>Messages</h2><button type="button" aria-label="Float messages"><svg><use href="#float"/></svg></button><button type="button" aria-label="Close messages"><svg><use href="#close"/></svg></button></div>
        <div class="log" role="log"></div>
      </div>
    </section>

    <div class="rail mid" role="toolbar" aria-label="Select tools">
      <button class="collapse" type="button" aria-label="Collapse">«</button>
      <i class="hgrip"></i>
      <div class="set five">
        <button class="tool" type="button" aria-label="Add to selection"><svg><use href="#selp"/></svg></button>
        <button class="tool" type="button" aria-label="Remove from selection"><svg><use href="#selm"/></svg></button>
        <button class="tool" type="button" aria-label="Toggle selection"><svg><use href="#toggle"/></svg></button>
        <button class="tool" type="button" aria-label="Select adjacent"><svg><use href="#cross"/></svg></button>
        <button class="tool" type="button" aria-label="Select by angle"><svg><use href="#angle"/></svg></button>
      </div>
      <hr>
      <div class="set four">
        <button class="tool" type="button" aria-label="Select parents"><svg><use href="#tree1"/></svg></button>
        <button class="tool" type="button" aria-label="Select children"><svg><use href="#tree2"/></svg></button>
        <button class="tool" type="button" aria-label="Select boundaries"><svg><use href="#diaout"/></svg></button>
        <button class="tool menu" type="button" aria-label="Select by type"><svg><use href="#stack"/></svg></button>
      </div>
      <hr>
      <div class="set three">
        <button class="tool" type="button" aria-label="Pick list"><svg><use href="#selg"/></svg></button>
        <button class="tool" type="button" aria-label="Pick region"><svg><use href="#selr"/></svg></button>
        <button class="tool" type="button" aria-label="Pick by metric"><svg><use href="#spec"/></svg></button>
      </div>
      <hr>
      <div class="set one"><button class="tool" type="button" aria-label="Zoom to selection"><svg><use href="#mag"/></svg></button></div>
    </div>

    <div class="rail view" role="toolbar" aria-label="View">
      <i class="hgrip"></i>
      <div class="set six">
        <button class="tool axis" type="button"><svg><use href="#axis"/></svg><b>+X</b></button>
        <button class="tool axis" type="button"><svg><use href="#axis"/></svg><b>-X</b></button>
        <button class="tool axis" type="button"><svg><use href="#axis"/></svg><b>+Y</b></button>
        <button class="tool axis" type="button"><svg><use href="#axis"/></svg><b>-Y</b></button>
        <button class="tool axis" type="button"><svg><use href="#axis"/></svg><b>+Z</b></button>
        <button class="tool axis" type="button"><svg><use href="#axis"/></svg><b>-Z</b></button>
      </div>
      <hr>
      <div class="set one"><button class="tool axis" type="button"><svg><use href="#axis"/></svg><b>n̂</b></button></div>
      <hr>
      <div class="set eleven">
        <button class="tool" type="button" aria-label="Show all"><svg><use href="#e-globe"/></svg></button>
        <button class="tool" type="button" aria-label="Show domains"><svg><use href="#e-dom"/></svg></button>
        <button class="tool" type="button" aria-label="Show connectors"><svg><use href="#e-conn"/></svg></button>
        <button class="tool" type="button" aria-label="Show nodes"><svg><use href="#e-pts"/></svg></button>
        <button class="tool" type="button" aria-label="Show database"><svg><use href="#e-pink"/></svg></button>
        <button class="tool" type="button" aria-label="Show sources"><svg><use href="#e-star"/></svg></button>
        <button class="tool" type="button" aria-label="Show grid"><svg><use href="#e-grid"/></svg></button>
        <button class="tool" type="button" aria-label="Show world axes"><svg><use href="#x-ax1"/></svg></button>
        <button class="tool" type="button" aria-label="Show body axes"><svg><use href="#x-ax2"/></svg></button>
        <button class="tool" type="button" aria-label="Show bounds"><svg><use href="#x-cube"/></svg></button>
        <button class="tool" type="button" aria-label="Show rulers"><svg><use href="#x-hash"/></svg></button>
      </div>
    </div>
  </main>

  <footer class="status">
    <svg class="stop"><use href="#oct"/></svg>
    <div class="bars"><div class="bar"></div><div class="bar"></div></div>
    <div class="solver">
      <div class="solvericons"><svg><use href="#grid"/></svg><svg><use href="#redcube"/></svg><b>3D</b></div>
      <span>CGNS</span>
    </div>
  </footer>
</div>
</body>
</html>
```
FILE: styles.css
```css
* { box-sizing: border-box; }
body { margin: 0; font: 8px/12px Lato, "Noto Sans", sans-serif; color: #222; background: #efefef; }
button, input, select { font: inherit; color: inherit; margin: 0; padding: 0; border: 0; background: none; }
h1, h2 { margin: 0; font-size: 8px; font-weight: 400; }
.sprite { position: absolute; width: 0; height: 0; }
.app { min-height: 100vh; display: flex; flex-direction: column; }

.titlebar { height: 11px; display: flex; align-items: center; background: #eaf4f9; padding-left: 1px; }
.logo { width: 8px; height: 8px; margin-right: 2px; }
.title { font-size: 6px; line-height: 11px; flex: 1; color: #444; }
.winbtns { display: flex; }
.winbtns button { width: 24px; height: 11px; display: grid; place-items: center; }
.winbtns svg { width: 6px; height: 6px; fill: none; stroke: #333; stroke-width: .8; }

.menubar { height: 15px; display: flex; align-items: flex-start; gap: 9px; padding: 1px 0 0 7px; }

.toolbar { height: 25px; display: flex; align-items: center; border-top: 1px solid #e2e2e2; border-bottom: 2px solid #a8a8a8; background: linear-gradient(#fbfbfb, #eee); }
.tool { flex: none; width: 22px; height: 20px; display: grid; place-items: center; position: relative; }
.tool svg { width: 16px; height: 16px; display: block; }
.tool.hover { width: 20px; margin: 0 0 0 3px; background: #fff; border: 1px solid #c6bfc4; }
.tool.active { background: #e2e2e2; border: 1px solid #b2b2b2; }
.tooltip { position: absolute; z-index: 2; left: 16px; top: 22px; padding: 0 2px; height: 15px; line-height: 14px; white-space: nowrap; background: #ffffdc; border: 1px solid #333; }
.drop { flex: none; width: 8px; height: 20px; display: grid; place-items: center start; }
.drop::before, .combo::after, .filter button::before, .tool.menu::after { content: ""; border: 2px solid transparent; border-top: 3px solid #444; border-bottom: 0; }
.tool.menu::after { position: absolute; right: 0; bottom: 1px; }
.drop.off::before { border-top-color: #999; }
.grip { flex: none; width: 10px; height: 16px; background: linear-gradient(90deg, transparent 4px, #dcdcdc 4px, #dcdcdc 5px, transparent 5px, transparent 6px, #dcdcdc 6px, #dcdcdc 7px, transparent 7px); }
.grip.lead { width: 8px; }
.grip.wide { width: 11px; }
.sep { flex: none; width: 5px; height: 16px; background: linear-gradient(90deg, transparent 2px, #d4d4d4 2px, #d4d4d4 3px, transparent 3px); }
.sep.wide { width: 7px; }
.combo { flex: none; position: relative; display: flex; width: 43px; height: 14px; margin: 0 3px; border: 1px solid #d2d2d2; background: #f2f2f2; }
.combo.first { margin: 0 1px 0 0; }
.combo.last { margin: 0 3px 0 0; }
.combo select { appearance: none; flex: 1; min-width: 0; border-right: 1px solid #c4c4c4; margin-right: 7px; }
.combo::after { position: absolute; right: 1px; top: 5px; }
.more, .collapse { font-size: 12px; line-height: 12px; }
.more { margin: 0 auto; padding-bottom: 2px; }

.main { flex: 1; display: flex; align-items: stretch; }
.rail { flex: none; width: 26px; display: flex; flex-direction: column; align-items: center; background: #f3f3f3; }
.rail hr { width: 16px; height: 1px; margin: 1px 0; border: 0; background: #dadada; }
.left { padding-top: 7px; border-right: 1px solid #d5d5d5; background: linear-gradient(90deg, #fafafa, #efefef); }
.mid { width: 27px; padding: 0 0 0 3px; background: #efefef; border-right: 1px solid #d2d2d2; }
.view { padding-top: 3px; background: linear-gradient(90deg, #fafafa, #f0f0f0); }
.set { display: grid; grid-auto-rows: 1fr; place-items: center; }
.twelve { height: 258px; } .eleven { height: 236px; } .six { height: 129px; } .five { height: 103px; } .four { height: 83px; } .three { height: 62px; } .one { height: 22px; }
.left .set + hr { margin: 2px 0; }
.mid hr { margin: 1px 0 2px; }
.view hr { margin: 1px 0 2px; }
.hgrip { width: 14px; height: 4px; background: repeating-linear-gradient(90deg, #dcdcdc 0 1px, transparent 1px 3px); }
.collapse { color: #4c7db8; align-self: flex-end; width: 10px; height: 16px; padding-bottom: 2px; }
.mid .hgrip { margin-bottom: 6px; }
.axis svg { width: 16px; height: 14px; }
.axis b { position: absolute; left: 7px; top: 3px; font: 700 10px/12px "Noto Sans", sans-serif; color: #111; }

.panels { flex: none; width: 315px; display: flex; flex-direction: column; padding: 0 0 1px 1px; }
.dockhead { display: flex; align-items: center; height: 14px; padding: 0 1px 0 2px; }
.dockhead h2 { flex: 1; }
.dockhead button, .dockhead svg { display: block; width: 8px; height: 8px; }
.dockhead button + button { margin-left: 2px; }
.tabs { display: grid; grid-template-columns: repeat(3, 1fr); height: 19px; }
.tab { background: #dcdcdc; border: 1px solid #c8c8c8; border-left: 0; border-bottom: 0; margin-top: 1px; }
.tab.on { display: flex; align-items: center; margin: 0; background: linear-gradient(#fff, #f1f1f1); border-left: 1px solid #c0c0c0; }
.tab.on span { flex: 1; padding-left: 2px; }
.tab svg { width: 9px; height: 9px; margin: 0 11px 0 5px; }
.tabbody { flex: 1; display: flex; flex-direction: column; gap: 4px; border: 1px solid #bdbdbd; border-top: 0; padding: 6px 3px 3px 2px; background: #f1f1f1; }
.filter { display: flex; align-items: center; height: 14px; background: #fff; border: 1px solid #d0d0d0; }
.filter svg { width: 10px; height: 9px; margin: 0 3px 0 5px; }
.filter input { flex: 1; min-width: 0; height: 12px; outline: 0; }
.filter input::placeholder { color: #777; opacity: 1; }
.filter button { width: 8px; height: 12px; border: 1px solid #aaa; display: grid; place-items: center; }
.treebox { flex: 1; background: #fff; border: 1px solid #c8c8c8; }
.tree { width: 100%; table-layout: fixed; border-collapse: collapse; }
.c-ind { width: 14px; } .c-name { width: 119px; } .c-type { width: 73px; } .c-third { width: 47px; }
.tree th { height: 13px; padding: 0; font-weight: 400; line-height: 12px; background: linear-gradient(#fff, #ececec); border-right: 1px solid #d4d4d4; border-bottom: 1px solid #ccc; }
.tree td { height: 12px; padding: 0 2px; line-height: 12px; background: #efefef; white-space: nowrap; }
.tree td:first-child { background: #fff; padding: 0 5px; }
.tree td:nth-child(n+4) { text-align: right; }
.tree td svg { width: 9px; height: 9px; margin-right: 4px; vertical-align: -1px; }
.expand { display: block; width: 3px; height: 6px; border: 3px solid transparent; border-left-color: #444; border-right: 0; }

.center { flex: 1; min-width: 0; margin-left: 4px; display: flex; flex-direction: column; }
.viewport { flex: 1; min-height: 0; background: #000; display: flex; }
.scene { flex: 1; width: 100%; display: block; }
.messages .dockhead { height: 17px; padding-top: 4px; }
.log { min-height: 112px; background: #fff; border: 1px solid #8a8a8a; border-width: 1px 0 0 1px; }

.status { height: 28px; display: flex; align-items: center; padding-left: 4px; }
.stop { width: 12px; height: 12px; margin-right: 3px; }
.bars { display: grid; gap: 3px; width: 67px; }
.bar { height: 8px; background: #fff; border: 1px solid #bbb; border-radius: 2px; }
.solver { margin-left: 9px; line-height: 12px; }
.solver span { padding-left: 2px; }
.solvericons { display: flex; align-items: center; gap: 4px; height: 12px; }
.solvericons svg { width: 10px; height: 10px; }
.solvericons b { font-weight: 900; color: #000; text-shadow: 1px 1px #aaa; }
```
